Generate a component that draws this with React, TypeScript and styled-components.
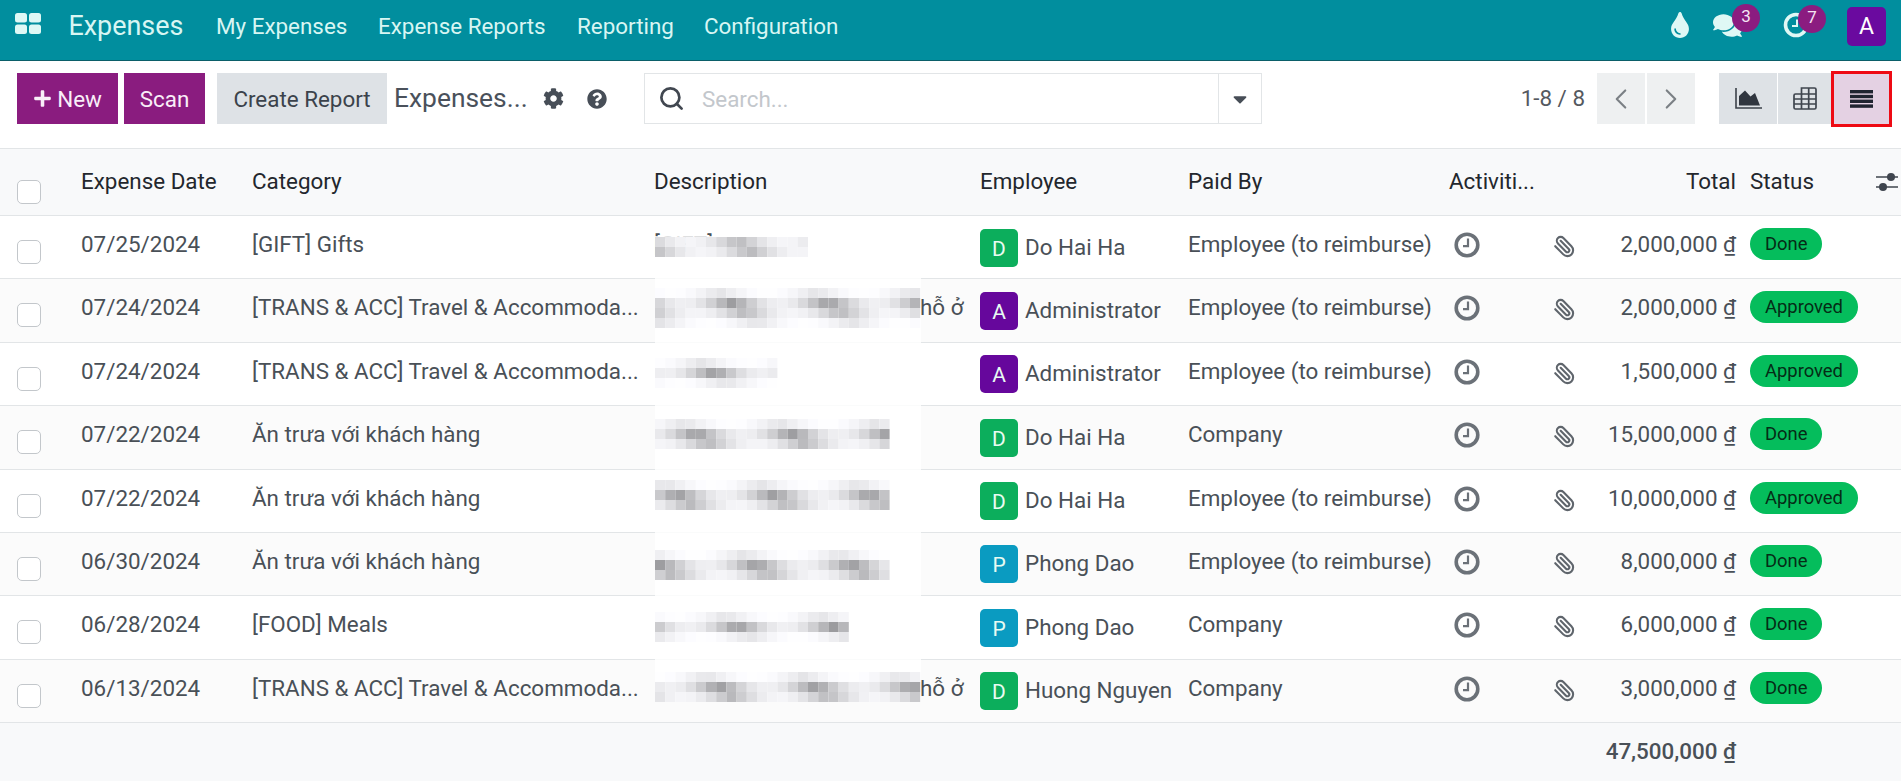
import React from "react";
import styled, { createGlobalStyle, css } from "styled-components";
import { FaPlus, FaCog, FaQuestionCircle, FaCaretDown, FaTint, FaComments } from "react-icons/fa";
import { ChevronLeft, ChevronRight, Paperclip, Search as SearchIcon } from "lucide-react";

const Global = createGlobalStyle`
  html, body { margin: 0; padding: 0; background: #fff; }
  body { width: 1901px; height: 781px; overflow: hidden; font-family: Roboto, "Noto Sans", sans-serif; font-size: 22.4px; color: #495057; }
  * { box-sizing: border-box; }
`;

const Page = styled.div`
  width: 1901px;
  height: 781px;
  display: flex;
  flex-direction: column;
`;

const Navbar = styled.header`
  height: 61px;
  flex: none;
  display: flex;
  align-items: center;
  background: #018e9e;
  border-bottom: 1px solid #0b5f69;
  color: #d8f6f3;
  padding-left: 15px;
`;
const AppsIcon = styled.svg`
  width: 26px;
  height: 21px;
  margin-top: -13px;
  fill: #dff8f5;
`;
const Brand = styled.span`
  font-size: 26.9px;
  margin-left: 27.5px;
  margin-top: -8px;
  width: 147.5px;
`;
const NavItem = styled.span<{ $w: number }>`
  width: ${(p) => p.$w}px;
  margin-top: -8px;
`;
const NavRight = styled.div`
  margin-left: auto;
  display: flex;
  align-items: center;
  height: 100%;
  padding-right: 15px;
`;
const NavIcon = styled.span<{ $w: number }>`
  position: relative;
  width: ${(p) => p.$w}px;
  display: flex;
  justify-content: flex-start;
  align-items: center;
  margin-top: -10px;
  color: #dff8f5;
`;
const Badge = styled.span<{ $left: number }>`
  position: absolute;
  left: ${(p) => p.$left}px;
  top: -7px;
  width: 28px;
  height: 28px;
  border-radius: 50%;
  background: #8b1c80;
  color: #f5e6f3;
  font-size: 17px;
  line-height: 24px;
  text-align: center;
`;
const UserAvatar = styled.span`
  width: 39px;
  height: 39px;
  margin-top: -7px;
  border-radius: 5px;
  background: #6a0a9f;
  color: #fff;
  font-size: 23px;
  display: flex;
  align-items: center;
  justify-content: center;
`;

const Toolbar = styled.div`
  height: 87px;
  flex: none;
  display: flex;
  align-items: flex-start;
  padding: 12px 12px 0 17px;
`;
const Button = styled.button<{ $w: number; $ml?: number; $kind: "primary" | "secondary" }>`
  width: ${(p) => p.$w}px;
  height: 51px;
  margin-left: ${(p) => p.$ml ?? 0}px;
  border: 0;
  padding: 0;
  display: flex;
  align-items: center;
  justify-content: center;
  gap: 5px;
  font: inherit;
  background: ${(p) => (p.$kind === "primary" ? "#8a1c7f" : "#dee2e6")};
  color: ${(p) => (p.$kind === "primary" ? "#f9eef8" : "#3b424b")};
`;
const Title = styled.div`
  width: 133px;
  height: 51px;
  line-height: 50px;
  margin-left: 7px;
  font-size: 26.4px;
  color: #4a515b;
  white-space: nowrap;
`;
const ToolIcon = styled.span<{ $ml: number }>`
  display: flex;
  align-items: center;
  height: 51px;
  margin-left: ${(p) => p.$ml}px;
  color: #474e57;
`;
const Search = styled.div`
  width: 618px;
  height: 51px;
  margin-left: 37px;
  display: flex;
  align-items: center;
  border: 1.5px solid #e2e5e7;
`;
const SearchGlass = styled.span`
  display: flex;
  margin-left: 13px;
  color: #414750;
`;
const SearchText = styled.span`
  margin-left: 17px;
  flex: 1;
  color: #c3c7cc;
`;
const SearchCaret = styled.span`
  width: 43px;
  height: 100%;
  display: flex;
  align-items: center;
  justify-content: center;
  border-left: 1.5px solid #e2e5e7;
  color: #474e57;
`;
const Pager = styled.div`
  margin-left: auto;
  margin-right: 12px;
  line-height: 51px;
  color: #55595f;
`;
const PagerButton = styled.span<{ $ml: number }>`
  width: 48px;
  height: 51px;
  margin-left: ${(p) => p.$ml}px;
  background: #eef0f1;
  color: #7b8085;
  display: flex;
  align-items: center;
  justify-content: center;
`;
const ViewButton = styled.span<{ $w: number; $ml: number }>`
  width: ${(p) => p.$w}px;
  height: 51px;
  margin-left: ${(p) => p.$ml}px;
  background: #dee2e6;
  display: flex;
  align-items: center;
  justify-content: center;
`;
const ActiveView = styled.span`
  position: relative;
  width: 55px;
  height: 51px;
  margin-left: 3px;
  background: #e4d1e3;
  display: flex;
  align-items: center;
  justify-content: center;
  &::after {
    content: "";
    position: absolute;
    inset: -2px -3px -3px -3px;
    border: 3px solid #ee0a14;
  }
`;

const columns = css`
  display: grid;
  grid-template-columns: 81px 171px 402px 326px 208px 261px 85px 60px 142px 14px 151px;
`;
const TableArea = styled.div`
  position: relative;
  flex: 1;
  display: flex;
  flex-direction: column;
`;
const HeaderRow = styled.div`
  ${columns}
  height: 68px;
  flex: none;
  background: #f8f9fa;
  border-top: 1.5px solid #e2e5e7;
  border-bottom: 1.5px solid #e2e5e7;
  color: #23272d;
  line-height: 34px;
  padding-top: 15px;
`;
const Row = styled.div<{ $alt: boolean }>`
  ${columns}
  height: 63.4px;
  flex: none;
  background: ${(p) => (p.$alt ? "#fbfbfb" : "#fff")};
  border-bottom: 1.5px solid #e2e5e7;
  line-height: 34px;
`;
const Cell = styled.div`
  padding-top: 11px;
  min-width: 0;
  white-space: nowrap;
`;
const HeaderCell = styled.div<{ $col: number }>`
  grid-column: ${(p) => p.$col};
  min-width: 0;
  white-space: nowrap;
`;
const RightHead = styled(HeaderCell)`
  text-align: right;
`;
const StatusHead = styled(HeaderCell)`
  display: flex;
  justify-content: space-between;
  padding-right: 3px;
`;
const Check = styled.span`
  display: block;
  width: 24px;
  height: 24px;
  margin: 24px 0 0 17px;
  border: 1.5px solid #c3c7cb;
  border-radius: 5px;
  background: #fff;
`;
const HeadCheck = styled(Check)`
  grid-column: 1;
  margin-top: 16px;
`;
const Employee = styled.div`
  padding-top: 12.5px;
  display: flex;
  align-items: flex-start;
  gap: 7px;
  white-space: nowrap;
`;
const Avatar = styled.span<{ $color: string }>`
  width: 38px;
  height: 38px;
  flex: none;
  border-radius: 5px;
  background: ${(p) => p.$color};
  color: #e8fbf2;
  font-size: 21px;
  line-height: 40px;
  text-align: center;
`;
const EmployeeName = styled.span`
  line-height: 37px;
`;
const ActivityIcon = styled.svg`
  display: block;
  width: 26px;
  height: 26px;
  margin: 16px 0 0 5px;
  color: #6b7178;
`;
const ClipCell = styled.div`
  display: flex;
  justify-content: center;
  padding-top: 19px;
  color: #5f656c;
  svg { transform: scaleX(-1); }
`;
const Total = styled(Cell)`
  text-align: right;
`;
const Pill = styled.span`
  display: inline-block;
  height: 32px;
  line-height: 32px;
  padding: 0 15px;
  margin-top: 12px;
  border-radius: 16px;
  background: #05bd5c;
  color: #052c16;
  font-size: 18.4px;
  grid-column: 11;
  justify-self: start;
`;
const Footer = styled.div`
  ${columns}
  flex: 1;
  background: #f8f9fa;
  line-height: 34px;
  font-weight: 500;
  padding-top: 11px;
  color: #495057;
`;
const FootTotal = styled.div`
  grid-column: 8 / span 2;
  text-align: right;
  white-space: nowrap;
`;
const Redaction = styled.div`
  position: absolute;
  left: 655px;
  top: 88px;
  width: 266px;
  height: 466px;
  background: rgba(255, 255, 255, 0.82);
`;
const MosaicSvg = styled.svg`
  display: block;
  width: 266px;
  height: 466px;
`;
const HiddenEnd = styled.span`
  margin-left: 266px;
`;

const AppsGlyph = () => (
  <AppsIcon viewBox="0 0 26 21">
    <rect x="0" y="0" width="12" height="9.5" rx="2.5" />
    <rect x="14" y="0" width="12" height="9.5" rx="2.5" />
    <rect x="0" y="11.5" width="12" height="9.5" rx="2.5" />
    <rect x="14" y="11.5" width="12" height="9.5" rx="2.5" />
  </AppsIcon>
);
const NavClock = () => (
  <svg width="26" height="26" viewBox="0 0 26 26" fill="none" stroke="currentColor">
    <circle cx="13" cy="13" r="10.5" strokeWidth="3.6" />
    <path d="M14 7.5V14H9" strokeWidth="2" />
  </svg>
);
const ClockGlyph = () => (
  <ActivityIcon viewBox="0 0 26 26" fill="none" stroke="currentColor">
    <circle cx="13" cy="13" r="10.8" strokeWidth="3.6" />
    <path d="M14 6.5V14.2H9" strokeWidth="2.2" />
  </ActivityIcon>
);
const AreaGlyph = () => (
  <svg width="27" height="21" viewBox="0 0 27 21">
    <path d="M1 0V20H27" fill="none" stroke="#3b414a" strokeWidth="1.6" />
    <path d="M4 17.5V8L10 2.5 15.5 8.5 20 5 25 17.5Z" fill="#30363f" />
  </svg>
);
const PivotGlyph = () => (
  <svg width="24" height="23" viewBox="0 0 24 23" fill="none" stroke="#3f454e" strokeWidth="1.7">
    <path d="M8.5 1H21.5a1.5 1.5 0 0 1 1.5 1.5V20.5A1.5 1.5 0 0 1 21.5 22H2.5A1.5 1.5 0 0 1 1 20.5V8.5A1.5 1.5 0 0 1 2.5 7H8.5Z" />
    <path d="M8.5 7V22M15.7 1V22M1 12H23M1 17H23M8.5 7H23" />
  </svg>
);
const ListGlyph = () => (
  <svg width="23" height="18" viewBox="0 0 23 18" fill="#1f2430">
    <rect y="0" width="23" height="3.4" />
    <rect y="4.8" width="23" height="3.4" />
    <rect y="9.6" width="23" height="3.4" />
    <rect y="14.4" width="23" height="3.4" />
  </svg>
);
const SlidersSvg = styled.svg`
  margin-top: 8px;
  fill: #3f454e;
`;
const SlidersGlyph = () => (
  <SlidersSvg width="22" height="20" viewBox="0 0 22 20">
    <path d="M0 5H22M0 15H22" stroke="#3f454e" strokeWidth="1.4" />
    <circle cx="15" cy="5" r="4" />
    <circle cx="7" cy="15" r="4" />
  </SlidersSvg>
);

type Band = "l" | "m" | "d";
const patches: { top: number; cols: number; bands: Band[] }[] = [
  { top: 1, cols: 15, bands: ["m", "m"] },
  { top: 52, cols: 26, bands: ["l", "d", "m", "l"] },
  { top: 122, cols: 12, bands: ["l", "d", "l"] },
  { top: 183, cols: 23, bands: ["l", "d", "m"] },
  { top: 244, cols: 23, bands: ["l", "d", "m"] },
  { top: 314, cols: 23, bands: ["l", "d", "m"] },
  { top: 376, cols: 19, bands: ["l", "d", "l"] },
  { top: 436, cols: 26, bands: ["l", "d", "m"] },
];
const shade = (band: Band, r: number) => {
  const base = band === "d" ? 155 + r * 85 : band === "m" ? 185 + r * 60 : 228 + r * 26;
  const v = Math.round(base);
  return `rgb(${v},${v},${Math.min(255, v + 3)})`;
};
const Mosaic = () => {
  const rects: React.ReactElement[] = [];
  patches.forEach((p, pi) =>
    p.bands.forEach((b, bi) => {
      for (let c = 0; c < p.cols; c++) {
        const r = Math.abs(Math.sin((pi + 1) * 91.7 + bi * 37.3 + c * 12.9)) % 1;
        rects.push(<rect key={`${pi}-${bi}-${c}`} x={c * 10.2} y={p.top + bi * 10} width="10.2" height="10" fill={shade(b, r)} />);
      }
    })
  );
  return <MosaicSvg viewBox="0 0 266 466">{rects}</MosaicSvg>;
};

const GREEN = "#0cae5c";
const PURPLE = "#66079c";
const BLUE = "#0a9bc1";
const TRAVEL = "[TRANS & ACC] Travel & Accommoda...";
const LUNCH = "Ăn trưa với khách hàng";
const rows = [
  { date: "07/25/2024", cat: "[GIFT] Gifts", desc: "[GIFT]", init: "D", color: GREEN, name: "Do Hai Ha", paid: "Employee (to reimburse)", total: "2,000,000", status: "Done" },
  { date: "07/24/2024", cat: TRAVEL, tail: "hỗ ở", init: "A", color: PURPLE, name: "Administrator", paid: "Employee (to reimburse)", total: "2,000,000", status: "Approved" },
  { date: "07/24/2024", cat: TRAVEL, init: "A", color: PURPLE, name: "Administrator", paid: "Employee (to reimburse)", total: "1,500,000", status: "Approved" },
  { date: "07/22/2024", cat: LUNCH, init: "D", color: GREEN, name: "Do Hai Ha", paid: "Company", total: "15,000,000", status: "Done" },
  { date: "07/22/2024", cat: LUNCH, init: "D", color: GREEN, name: "Do Hai Ha", paid: "Employee (to reimburse)", total: "10,000,000", status: "Approved" },
  { date: "06/30/2024", cat: LUNCH, init: "P", color: BLUE, name: "Phong Dao", paid: "Employee (to reimburse)", total: "8,000,000", status: "Done" },
  { date: "06/28/2024", cat: "[FOOD] Meals", init: "P", color: BLUE, name: "Phong Dao", paid: "Company", total: "6,000,000", status: "Done" },
  { date: "06/13/2024", cat: TRAVEL, tail: "hỗ ở", init: "D", color: GREEN, name: "Huong Nguyen", paid: "Company", total: "3,000,000", status: "Done" },
];

export default function App() {
  return (
    <Page>
      <Global />
      <Navbar>
        <AppsGlyph />
        <Brand>Expenses</Brand>
        <NavItem $w={162}>My Expenses</NavItem>
        <NavItem $w={199}>Expense Reports</NavItem>
        <NavItem $w={127}>Reporting</NavItem>
        <NavItem $w={140}>Configuration</NavItem>
        <NavRight>
          <NavIcon $w={46}><FaTint size={26} /></NavIcon>
          <NavIcon $w={70}>
            <FaComments size={29} />
            <Badge $left={19}>3</Badge>
          </NavIcon>
          <NavIcon $w={64}>
            <NavClock />
            <Badge $left={15}>7</Badge>
          </NavIcon>
          <UserAvatar>A</UserAvatar>
        </NavRight>
      </Navbar>
      <Toolbar>
        <Button $w={101} $kind="primary"><FaPlus size={19} />New</Button>
        <Button $w={81} $ml={6} $kind="primary">Scan</Button>
        <Button $w={170} $ml={12} $kind="secondary">Create Report</Button>
        <Title>Expenses...</Title>
        <ToolIcon $ml={16}><FaCog size={21} /></ToolIcon>
        <ToolIcon $ml={23}><FaQuestionCircle size={20} /></ToolIcon>
        <Search>
          <SearchGlass><SearchIcon size={27} strokeWidth={2.4} /></SearchGlass>
          <SearchText>Search...</SearchText>
          <SearchCaret><FaCaretDown size={22} /></SearchCaret>
        </Search>
        <Pager>1-8 / 8</Pager>
        <PagerButton $ml={0}><ChevronLeft size={34} strokeWidth={1.5} /></PagerButton>
        <PagerButton $ml={2}><ChevronRight size={34} strokeWidth={1.5} /></PagerButton>
        <ViewButton $w={58} $ml={24}><AreaGlyph /></ViewButton>
        <ViewButton $w={53} $ml={1}><PivotGlyph /></ViewButton>
        <ActiveView><ListGlyph /></ActiveView>
      </Toolbar>
      <TableArea>
        <HeaderRow>
          <HeadCheck />
          <HeaderCell $col={2}>Expense Date</HeaderCell>
          <HeaderCell $col={3}>Category</HeaderCell>
          <HeaderCell $col={4}>Description</HeaderCell>
          <HeaderCell $col={5}>Employee</HeaderCell>
          <HeaderCell $col={6}>Paid By</HeaderCell>
          <HeaderCell $col={7}>Activiti...</HeaderCell>
          <RightHead $col={9}>Total</RightHead>
          <StatusHead $col={11}>Status<SlidersGlyph /></StatusHead>
        </HeaderRow>
        {rows.map((r, i) => (
          <Row key={i} $alt={i % 2 === 1}>
            <div><Check /></div>
            <Cell>{r.date}</Cell>
            <Cell>{r.cat}</Cell>
            <Cell>{r.tail ? <HiddenEnd>{r.tail}</HiddenEnd> : r.desc}</Cell>
            <Employee>
              <Avatar $color={r.color}>{r.init}</Avatar>
              <EmployeeName>{r.name}</EmployeeName>
            </Employee>
            <Cell>{r.paid}</Cell>
            <div><ClockGlyph /></div>
            <ClipCell><Paperclip size={23} strokeWidth={2.2} /></ClipCell>
            <Total>{r.total} ₫</Total>
            <Pill>{r.status}</Pill>
          </Row>
        ))}
        <Footer>
          <FootTotal>47,500,000 ₫</FootTotal>
        </Footer>
        <Redaction><Mosaic /></Redaction>
      </TableArea>
    </Page>
  );
}
